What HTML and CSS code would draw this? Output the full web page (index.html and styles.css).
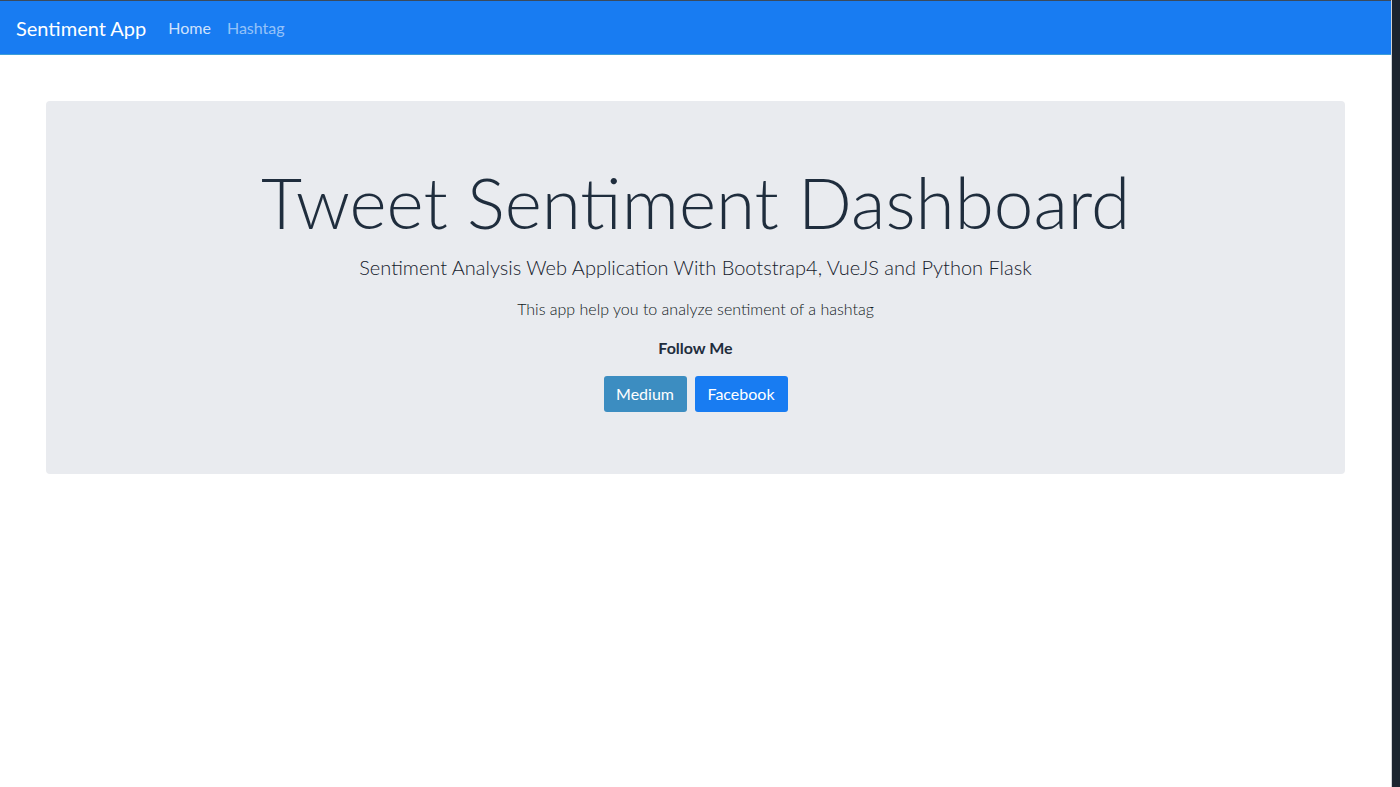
FILE: index.html
```html
<!DOCTYPE html>
<html>
<head>
<meta charset="utf-8">
<link rel="stylesheet" href="styles.css">
</head>
<body>
<div class="frame">
  <div class="page">
    <nav class="navbar">
      <span class="brand">Sentiment App</span>
      <a class="nav-link active">Home</a>
      <a class="nav-link">Hashtag</a>
    </nav>
    <main class="main">
      <section class="jumbotron">
        <h1 class="title">Tweet Sentiment Dashboard</h1>
        <p class="lead">Sentiment Analysis Web Application With Bootstrap4, VueJS and Python Flask</p>
        <p class="text">This app help you to analyze sentiment of a hashtag</p>
        <p class="follow">Follow Me</p>
        <div class="buttons">
          <a class="btn btn-medium">Medium</a>
          <a class="btn btn-facebook">Facebook</a>
        </div>
      </section>
    </main>
  </div>
  <div class="edge"></div>
</div>
</body>
</html>
```
FILE: styles.css
```css
* { box-sizing: border-box; }
html, body { margin: 0; padding: 0; height: 100%; }
body {
  font-family: Lato, "Open Sans", sans-serif;
  color: #212529;
  background: #fff;
}
.frame { display: flex; height: 787px; }
.page { flex: 1; display: flex; flex-direction: column; background: #fff; }
.edge { flex: 0 0 9px; background: #1c2530; border-left: 1px solid #cfd3d8; }
.navbar {
  height: 55px;
  background: #187cf2;
  border-top: 1px solid #3a4a5c;
  border-bottom: 1px solid #3d9ed8;
  display: flex;
  align-items: center;
  padding: 0 16px;
}
.brand { color: #fff; font-size: 20px; margin-right: 22px; }
.nav-link { color: rgba(255,255,255,0.8); font-size: 16px; margin-right: 16px; }
.nav-link:last-child { color: rgba(255,255,255,0.55); }
.main { padding: 46px 46px 0; }
.jumbotron {
  background: #e9ebef;
  border-radius: 4px;
  height: 373px;
  display: flex;
  flex-direction: column;
  align-items: center;
  padding-top: 58px;
  color: #1f2d3d;
}
.title {
  margin: 0;
  font-size: 71px;
  font-weight: 300;
  line-height: 1.2;
}
.lead { margin: 11px 0 0; font-size: 20px; font-weight: 300; color: #15202c; }
.text { margin: 20px 0 0; font-size: 16px; font-weight: 300; color: #0f1822; }
.follow { margin: 20px 0 0; font-size: 16px; font-weight: 700; }
.buttons { display: flex; gap: 8px; margin-top: 19px; }
.btn {
  display: inline-block;
  color: #fff;
  font-size: 16px;
  height: 36px;
  line-height: 36px;
  padding: 0 12px;
  border-radius: 3px;
}
.btn-medium { background: #3c8dc1; width: 83px; text-align: center; }
.btn-facebook { background: #187cf2; width: 93px; text-align: center; }
```
